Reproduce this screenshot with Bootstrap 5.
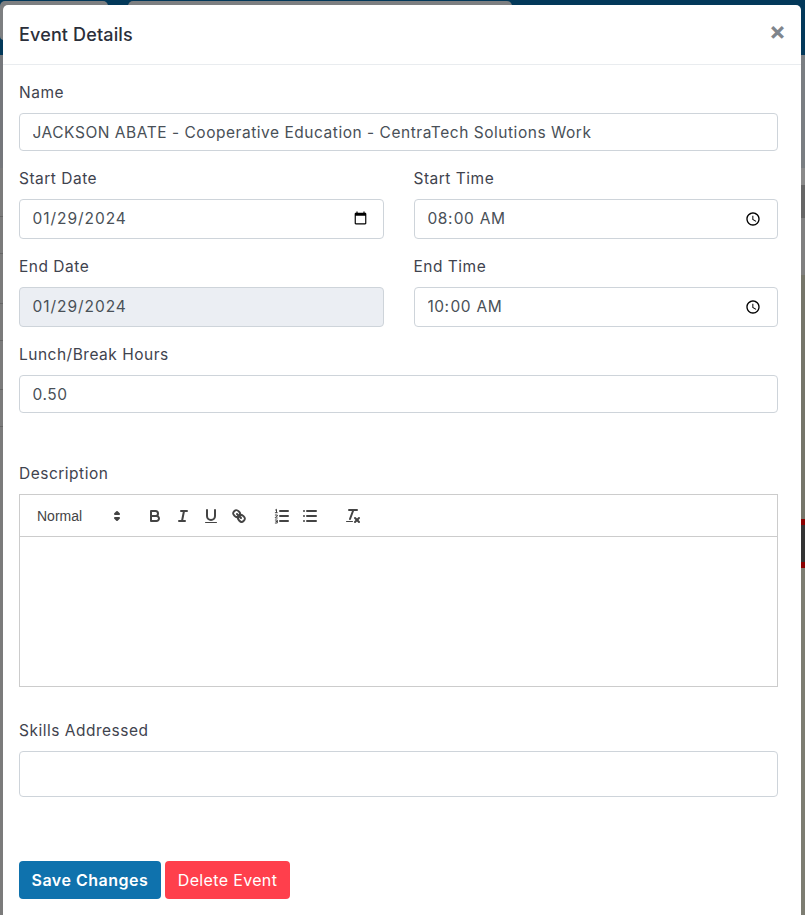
<!doctype html>
<html lang="en"><head><meta charset="utf-8"><title>Event Details</title>
<link href="https://cdn.jsdelivr.net/npm/bootstrap@5.3.0/dist/css/bootstrap.min.css" rel="stylesheet">
<style>
html,body{height:915px;overflow:hidden}
body{background:#7a7a7a;font-family:"Inter","Liberation Sans",sans-serif;color:#3f434e}
.top-band{height:55px;background:#03395a;display:flex;gap:20px;padding-top:1px}
.top-tab{height:39px;background:#7d7f81;border-radius:0 0 4px 4px;border-top-right-radius:5px;border-top-left-radius:5px}
.top-tab.one{width:108px}
.top-tab.two{width:384px}
.rails{height:860px;display:flex;justify-content:space-between}
.rail-l{width:3px;background:linear-gradient(#75777b 0 113px,#7b7b7b 113px 161px,#666 161px 162px,#7b7b7b 162px 198px,#666 198px 199px,#7b7b7b 199px 248px,#666 248px 249px,#7b7b7b 249px 285px,#666 285px 286px,#7b7b7b 286px 334px,#666 334px 335px,#7b7b7b 335px 371px,#666 371px 372px,#7b7b7b 372px)}
.rail-r{width:4px;background:linear-gradient(#7a7e82 0 113px,#8a8a8a 113px 130px,#666 130px 163px,#808080 163px 220px,#76766a 220px 464px,#8b0000 464px 470px,#333 470px 507px,#8b0000 507px 513px,#7d7d72 513px)}
.sheet.modal-content{position:absolute;left:3px;top:5px;width:798px;height:930px;border:0;border-radius:5px;background:#fff}
.sheet .modal-header{height:60px;padding:0 23px 0 16px;border-bottom:1px solid #e9ecef;border-radius:5px 5px 0 0}
.sheet .modal-title{font-size:18px;font-weight:500;color:#2b2f3a;line-height:1;letter-spacing:.15px}
.closer{border:0;background:none;padding:0;font-size:25px;font-weight:700;color:#7f858c;line-height:1;margin:-7px -8px 0 0}
.sheet .modal-body{padding:17px 23px 0 16px;flex:none}
.sheet .form-label{display:block;font-size:15.500px;line-height:22px;margin-bottom:9px;letter-spacing:.5px;color:#3f434e}
.sheet .form-control{height:40px;border-color:#ced4da;border-radius:4px;padding:0 12.500px;font-size:15.500px;letter-spacing:.53px;color:#495057;font-family:inherit;box-shadow:none}
.sheet .form-control.slim{height:38px}
.sheet .form-control.tall{height:46px}
.sheet .form-control:disabled{background:#ebeef3;color:#495057;opacity:1}
.sheet .form-control.when{letter-spacing:.95px}
.sheet .form-control.clock{letter-spacing:.5px;padding-left:13px}
.fieldset{margin-bottom:17px}
.duo{--bs-gutter-x:30px}
.spacer{height:33px}
.editor{border:1px solid #ccc}
.toolbar{height:42px;padding:9px 8px 7px;border-bottom:1px solid #ccc;display:flex;font-family:"Liberation Sans",sans-serif;font-size:14px;color:#444}
.tool-set{display:flex;margin-right:15px}
.picker{width:98px;height:24px;display:flex;align-items:center;justify-content:space-between;padding-left:9px}
.tool{width:28px;height:24px;padding:3px 5px;display:block}
.tool svg,.picker svg{display:block;width:18px;height:18px}
.tool svg,.picker svg{stroke:#444;fill:none;stroke-width:2;stroke-linecap:round;stroke-linejoin:round}
.filled{fill:#444;stroke:none}
.editpane{height:149px}
.actions{margin-top:64px}
.btn-save,.btn-del{font-size:16px;border-radius:4px;color:#fff;height:38px;padding:0 13px 0 12.500px;border:0;letter-spacing:.35px}
.btn-save{background:#0f72ad;font-weight:600;letter-spacing:.5px}
.btn-del{background:#ff3f4c}
.btn-save:hover{background:#0f72ad;color:#fff}
.btn-del:hover{background:#ff3f4c;color:#fff}
</style></head><body>
<div class="top-band"><div class="top-tab one"></div><div class="top-tab two"></div></div>
<div class="rails"><div class="rail-l"></div><div class="rail-r"></div></div>
<div class="sheet modal-content">
 <div class="modal-header"><h5 class="modal-title">Event Details</h5><button type="button" class="closer">×</button></div>
 <div class="modal-body">
  <div class="fieldset"><label class="form-label">Name</label><input class="form-control slim" type="text" value="JACKSON ABATE - Cooperative Education - CentraTech Solutions Work"></div>
  <div class="row duo">
   <div class="col-6"><div class="fieldset"><label class="form-label">Start Date</label><input class="form-control when" type="date" value="2024-01-29"></div></div>
   <div class="col-6"><div class="fieldset"><label class="form-label">Start Time</label><input class="form-control clock" type="time" value="08:00"></div></div>
   <div class="col-6"><div class="fieldset"><label class="form-label">End Date</label><input class="form-control when" type="date" value="2024-01-29" disabled></div></div>
   <div class="col-6"><div class="fieldset"><label class="form-label">End Time</label><input class="form-control clock" type="time" value="10:00"></div></div>
  </div>
  <div class="fieldset"><label class="form-label">Lunch/Break Hours</label><input class="form-control slim" type="text" value="0.50"></div>
  <div class="spacer"></div>
  <label class="form-label">Description</label>
  <div class="editor">
   <div class="toolbar">
    <div class="tool-set"><div class="picker"><span>Normal</span><svg viewBox="0 0 18 18"><polygon points="7 11 9 13 11 11 7 11"/><polygon points="7 7 9 5 11 7 7 7"/></svg></div></div>
    <div class="tool-set">
     <span class="tool"><svg viewBox="0 0 18 18"><path d="M5,4H9.500A2.500,2.500,0,0,1,12,6.500v0A2.500,2.500,0,0,1,9.500,9H5V4Z"/><path d="M5,9h5.500A2.500,2.500,0,0,1,13,11.500v0A2.500,2.500,0,0,1,10.500,14H5V9Z"/></svg></span>
     <span class="tool"><svg viewBox="0 0 18 18"><line x1="7" x2="13" y1="4" y2="4"/><line x1="5" x2="11" y1="14" y2="14"/><line x1="8" x2="10" y1="14" y2="4"/></svg></span>
     <span class="tool"><svg viewBox="0 0 18 18"><path d="M5,3V9a4.012,4.012,0,0,0,4,4H9a4.012,4.012,0,0,0,4-4V3"/><rect class="filled" height="1" rx=".5" ry=".5" width="12" x="3" y="15"/></svg></span>
     <span class="tool"><svg viewBox="0 0 18 18"><line x1="7" x2="11" y1="7" y2="11"/><path d="M8.900,4.577a3.476,3.476,0,0,1,.36,4.679A3.476,3.476,0,0,1,4.577,8.900C3.185,7.500,2.035,6.400,4.217,4.217S7.500,3.185,8.900,4.577Z"/><path d="M13.423,9.100a3.476,3.476,0,0,0-4.679-.36,3.476,3.476,0,0,0,.36,4.679c1.392,1.392,2.500,2.542,4.679.36S14.815,10.500,13.423,9.100Z"/></svg></span>
    </div>
    <div class="tool-set">
     <span class="tool"><svg viewBox="0 0 18 18"><line x1="7" x2="15" y1="4" y2="4"/><line x1="7" x2="15" y1="9" y2="9"/><line x1="7" x2="15" y1="14" y2="14"/><path stroke-width="1" d="M2.500 3l1-.7V5.500M2.300 5.700h2M2.300 8h2v1.200L2.300 10.400v.6h2M2.300 13h2v1.500H3M4.300 14.500V16h-2"/></svg></span>
     <span class="tool"><svg viewBox="0 0 18 18"><line x1="6" x2="15" y1="4" y2="4"/><line x1="6" x2="15" y1="9" y2="9"/><line x1="6" x2="15" y1="14" y2="14"/><line x1="3" x2="3" y1="4" y2="4"/><line x1="3" x2="3" y1="9" y2="9"/><line x1="3" x2="3" y1="14" y2="14"/></svg></span>
    </div>
    <div class="tool-set">
     <span class="tool"><svg viewBox="0 0 18 18"><line x1="5" x2="13" y1="3" y2="3"/><line x1="6" x2="9.350" y1="12" y2="3"/><line x1="11" x2="15" y1="11" y2="15"/><line x1="15" x2="11" y1="11" y2="15"/><rect class="filled" height="1" rx=".5" ry=".5" width="7" x="2" y="14"/></svg></span>
    </div>
   </div>
   <div class="editpane"></div>
  </div>
  <div class="spacer"></div>
  <label class="form-label">Skills Addressed</label>
  <input class="form-control tall" type="text">
  <div class="d-flex gap-1 actions"><button class="btn btn-save">Save Changes</button><button class="btn btn-del">Delete Event</button></div>
 </div>
</div>
</body></html>
